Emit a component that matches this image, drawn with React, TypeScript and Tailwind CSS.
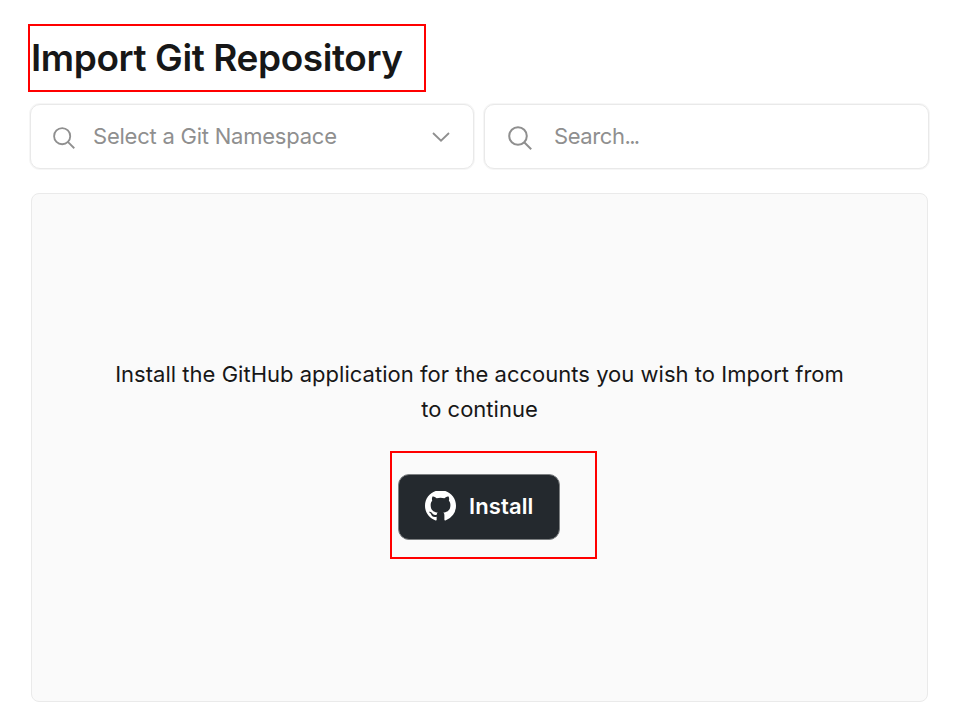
import type { ReactNode } from "react";

function SearchIcon({ size }: { size: number }) {
  return (
    <svg width={size} height={size} viewBox="0 0 24 24" fill="none" stroke="#8f8f8f" strokeWidth="2" className="shrink-0">
      <circle cx="10" cy="10" r="8.8" />
      <path d="M16.2 16.2L23.2 23.2" />
    </svg>
  );
}

function GitHubMark() {
  return (
    <svg width="31" height="30" viewBox="0 0.4 16 15.48" fill="#fff" className="shrink-0">
      <path d="M8 0C3.58 0 0 3.58 0 8c0 3.54 2.29 6.53 5.47 7.59.4.07.55-.17.55-.38 0-.19-.01-.82-.01-1.49-2.01.37-2.53-.49-2.69-.94-.09-.23-.48-.94-.82-1.13-.28-.15-.68-.52-.01-.53.63-.01 1.08.58 1.23.82.72 1.21 1.87.87 2.33.66.07-.52.28-.87.51-1.07-1.78-.2-3.64-.89-3.64-3.95 0-.87.31-1.59.82-2.15-.08-.2-.36-1.02.08-2.12 0 0 .67-.21 2.2.82.64-.18 1.32-.27 2-.27s1.36.09 2 .27c1.53-1.04 2.2-.82 2.2-.82.44 1.1.16 1.92.08 2.12.51.56.82 1.27.82 2.15 0 3.07-1.87 3.75-3.65 3.95.29.25.54.73.54 1.48v2.2c0 .21.15.46.55.38A8.01 8.01 0 0 0 16 8c0-4.42-3.58-8-8-8z" />
    </svg>
  );
}

function Field({ children }: { children: ReactNode }) {
  return (
    <div className="flex h-[65px] items-center rounded-[10px] border border-[#e9e9e9] bg-white pb-px text-[22px] leading-none text-[#8f8f8f] shadow-[0_0_0_1px_#f6f6f6]">
      {children}
    </div>
  );
}

export default function App() {
  return (
    <main className="h-[715px] w-[958px] overflow-hidden bg-white pt-6 font-['Inter',sans-serif] text-[#171717]">
      <h1 className="ml-7 flex h-[68px] w-[398px] items-center border-2 border-[#ff0000] pb-0.5 pl-px text-[37px] leading-none font-[560] whitespace-nowrap">
        <span className="tracking-[-0.4px]">Import Git Repository</span>
      </h1>
      <div className="mt-3 mr-[29px] ml-[30px] grid grid-cols-[444px_445px] gap-2.5">
        <Field>
          <span className="mt-[3px] ml-[22px]"><SearchIcon size={22} /></span>
          <span className="ml-[18px] tracking-[-0.23px] whitespace-nowrap">Select a Git Namespace</span>
          <svg width="18" height="10" viewBox="0 0 18 10" fill="none" stroke="#8f8f8f" strokeWidth="1.8" className="mt-px mr-[23px] ml-auto">
            <path d="M1 1L9 8.7L17 1" />
          </svg>
        </Field>
        <Field>
          <span className="mt-[3px] ml-[23px]"><SearchIcon size={24} /></span>
          <span className="ml-[22px] whitespace-nowrap">
            <span className="tracking-[-0.4px]">Search</span>
            <span className="tracking-[-1.8px]">...</span>
          </span>
        </Field>
      </div>
      <section className="mt-6 ml-[31px] flex h-[509px] w-[897px] flex-col items-center rounded-[8px] border border-[#eaeaea] bg-[#fafafa] pt-[163px]">
        <p className="text-center text-[22px] leading-[35px] whitespace-nowrap">
          <span className="block tracking-[0.02px]">Install the GitHub application for the accounts you wish to Import from</span>
          <span className="block">to continue</span>
        </p>
        <div className="mt-6 ml-[28px] flex h-[108px] w-[207px] items-center border-2 border-[#ff0000] pt-[3px] pl-[6px]">
          <button className="flex h-[66px] w-[162px] items-center rounded-[11px] border border-[#7d8082] bg-[#24292e] pb-px pl-[26px] text-[22px] font-semibold text-white">
            <GitHubMark />
            <span className="mt-px ml-[13px] tracking-[0.1px]">Install</span>
          </button>
        </div>
      </section>
    </main>
  );
}
